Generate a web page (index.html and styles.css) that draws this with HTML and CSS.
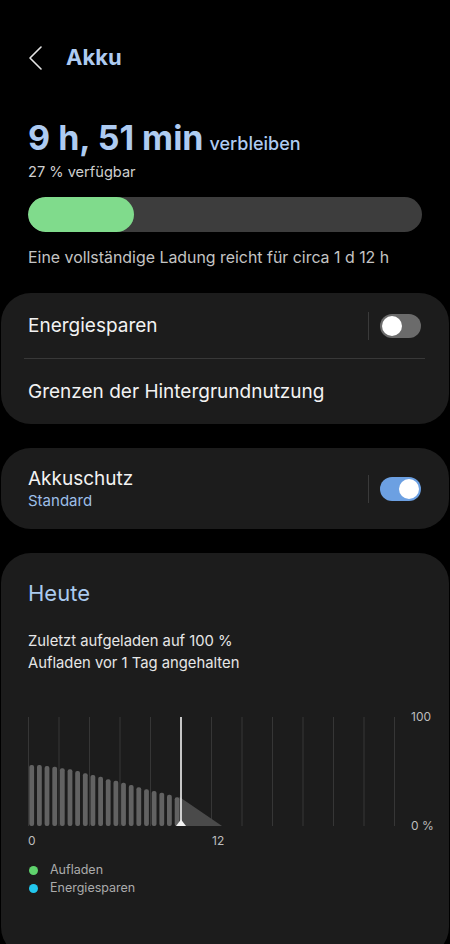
FILE: index.html
```html
<!doctype html>
<html lang="de">
    <head>
        <meta charset="utf-8">
        <meta name="viewport" content="width=device-width,initial-scale=1">
        <title>Akku</title>
        <link rel="stylesheet" href="styles.css">
    </head>
    <body>
        <header class="topbar">
            <svg class="back" width="16" height="24" viewBox="0 0 16 24">
                <polyline points="13,1 2,12 13,23" fill="none" stroke="#e4e4e4" stroke-width="1.6" stroke-linecap="round" stroke-linejoin="round"/>
            </svg>
            <h1 class="title">Akku</h1>
        </header>

        <section class="summary">
            <div class="remaining"><span class="time">9 h, 51 min</span><span class="left">verbleiben</span></div>
            <div class="available">27 % verfügbar</div>
            <div class="level">
                <div class="level-fill" style="width: 27%"></div>
            </div>
            <div class="full-charge">Eine vollständige Ladung reicht für circa 1 d 12 h</div>
        </section>

        <section class="card">
            <div class="row">
                <span class="row-label">Energiesparen</span>
                <span class="sep"></span>
                <span class="switch"></span>
            </div>
            <div class="divider"></div>
            <div class="row">
                <span class="row-label">Grenzen der Hintergrundnutzung</span>
            </div>
        </section>

        <section class="card">
            <div class="row row-tall">
                <div class="row-text">
                    <div class="row-label">Akkuschutz</div>
                    <div class="row-sub">Standard</div>
                </div>
                <span class="sep"></span>
                <span class="switch on"></span>
            </div>
        </section>

        <section class="card today">
            <h2 class="today-title">Heute</h2>
            <p class="today-info">Zuletzt aufgeladen auf 100 %<br>Aufladen vor 1 Tag angehalten</p>
            <svg class="chart" width="414" height="145" viewBox="0 0 414 145">
                <g stroke="#363636" stroke-width="1">
                    <line x1="0.5" y1="12" x2="0.5" y2="121"/>
                    <line x1="31" y1="12" x2="31" y2="121"/>
                    <line x1="61.5" y1="12" x2="61.5" y2="121"/>
                    <line x1="92" y1="12" x2="92" y2="121"/>
                    <line x1="122.5" y1="12" x2="122.5" y2="121"/>
                    <line x1="183.5" y1="12" x2="183.5" y2="121"/>
                    <line x1="214" y1="12" x2="214" y2="121"/>
                    <line x1="244.5" y1="12" x2="244.5" y2="121"/>
                    <line x1="275" y1="12" x2="275" y2="121"/>
                    <line x1="305.5" y1="12" x2="305.5" y2="121"/>
                    <line x1="336" y1="12" x2="336" y2="121"/>
                    <line x1="366.5" y1="12" x2="366.5" y2="121"/>
                </g>
                <g fill="#626262">
                    <rect x="1.3" y="60" width="4.8" height="61" rx="2"/>
                    <rect x="9" y="60" width="4.8" height="61" rx="2"/>
                    <rect x="16.6" y="61" width="4.8" height="60" rx="2"/>
                    <rect x="24.3" y="61.7" width="4.8" height="59.3" rx="2"/>
                    <rect x="31.9" y="63.3" width="4.8" height="57.7" rx="2"/>
                    <rect x="39.6" y="64.3" width="4.8" height="56.7" rx="2"/>
                    <rect x="47.2" y="66" width="4.8" height="55" rx="2"/>
                    <rect x="54.9" y="68.3" width="4.8" height="52.7" rx="2"/>
                    <rect x="62.5" y="70" width="4.8" height="51" rx="2"/>
                    <rect x="70.2" y="71.7" width="4.8" height="49.3" rx="2"/>
                    <rect x="77.8" y="74.3" width="4.8" height="46.7" rx="2"/>
                    <rect x="85.5" y="75.7" width="4.8" height="45.3" rx="2"/>
                    <rect x="93.1" y="77.7" width="4.8" height="43.3" rx="2"/>
                    <rect x="100.8" y="80" width="4.8" height="41" rx="2"/>
                    <rect x="108.4" y="82.3" width="4.8" height="38.7" rx="2"/>
                    <rect x="116.1" y="84.3" width="4.8" height="36.7" rx="2"/>
                    <rect x="123.7" y="86" width="4.8" height="35" rx="2"/>
                    <rect x="131.4" y="87.7" width="4.8" height="33.3" rx="2"/>
                    <rect x="139" y="89.7" width="4.8" height="31.3" rx="2"/>
                    <rect x="146.7" y="92.3" width="4.8" height="28.7" rx="2"/>
                </g>
                <polygon points="151.5,92 194,121 151.5,121" fill="#4a4a4a"/>
                <line x1="153" y1="12" x2="153" y2="121" stroke="#f2f2f2" stroke-width="1.6"/>
                <polygon points="153,114.5 158,121 148,121" fill="#f2f2f2"/>
                <g class="axis">
                    <text x="383" y="16">100</text>
                    <text x="383" y="125">0 %</text>
                    <text x="0" y="139.5">0</text>
                    <text x="184" y="139.5">12</text>
                </g>
            </svg>
            <ul class="legend">
                <li><span class="dot charge"></span>Aufladen</li>
                <li><span class="dot saving"></span>Energiesparen</li>
            </ul>
        </section>
    </body>
</html>
```

FILE: styles.css
```css
body {
    margin: 0;
    background: #000;
    color: #f2f2f2;
    font-family: Inter, Roboto, "Noto Sans", Arial, sans-serif;
}
.topbar {
    display: flex;
    align-items: center;
    height: 48px;
    padding: 34px 0 0 28px;
}
.back {
    display: block;
}
.title {
    margin: 0 0 2px 22px;
    font-size: 22px;
    font-weight: 700;
    color: #aecbf1;
}
.summary {
    padding: 0 28px;
}
.remaining {
    margin-top: 36px;
    height: 40px;
    font-size: 34px;
    line-height: 40px;
    color: #aecbf1;
}
.time {
    font-weight: 700;
}
.left {
    margin-left: 6px;
    font-size: 18px;
    font-weight: 500;
    line-height: 1;
}
.available {
    margin-top: 4px;
    font-size: 14.6px;
    line-height: 20px;
    color: #cfcfcf;
}
.level {
    margin-top: 15px;
    height: 35px;
    border-radius: 18px;
    background: #3d3d3d;
    overflow: hidden;
}
.level-fill {
    height: 100%;
    border-radius: 18px;
    background: #80db8c;
}
.full-charge {
    margin-top: 15px;
    font-size: 15.9px;
    line-height: 22px;
    color: #c4c4c4;
}
.card {
    margin: 24px 1px 0;
    padding: 0 28px 0 27px;
    border-radius: 30px;
    background: #1c1c1c;
}
.row {
    display: flex;
    align-items: center;
    height: 65px;
}
.row-label {
    flex: 1;
    font-size: 19px;
    line-height: 24px;
    color: #f2f2f2;
}
.row-tall {
    height: 81px;
}
.row-text {
    flex: 1;
}
.row-sub {
    font-size: 15px;
    line-height: 20px;
    color: #9dbfe8;
}
.sep {
    width: 1px;
    height: 28px;
    margin-right: 11px;
    background: #3a3a3a;
}
.switch {
    position: relative;
    width: 41px;
    height: 24px;
    border-radius: 12px;
    background: #6b6b6b;
}
.switch::after {
    content: "";
    position: absolute;
    top: 2px;
    left: 2px;
    width: 20px;
    height: 20px;
    border-radius: 50%;
    background: #fff;
}
.switch.on {
    background: #6ca0e2;
}
.switch.on::after {
    left: 19px;
}
.divider {
    height: 1px;
    margin: 0 -4px 0 -4px;
    background: #383838;
}
.today {
    padding-top: 25px;
    padding-bottom: 60px;
}
.today-title {
    margin: 0;
    font-size: 22px;
    font-weight: 400;
    line-height: 30px;
    color: #aacaee;
}
.today-info {
    margin: 22px 0 0;
    font-size: 14.8px;
    line-height: 22px;
    color: #e6e6e6;
}
.chart {
    display: block;
    margin-top: 31px;
}
.axis text {
    font-family: Inter, Roboto, Arial, sans-serif;
    font-size: 12px;
    fill: #bdbdbd;
}
.legend {
    list-style: none;
    margin: 11px 0 0;
    padding: 0;
    font-size: 12.5px;
    line-height: 18px;
    color: #ababab;
}
.legend li {
    display: flex;
    align-items: center;
}
.dot {
    width: 9px;
    height: 9px;
    margin: 0 12px 0 1px;
    border-radius: 50%;
}
.dot.charge {
    background: #5fd36d;
}
.dot.saving {
    background: #22c7ee;
}
```
